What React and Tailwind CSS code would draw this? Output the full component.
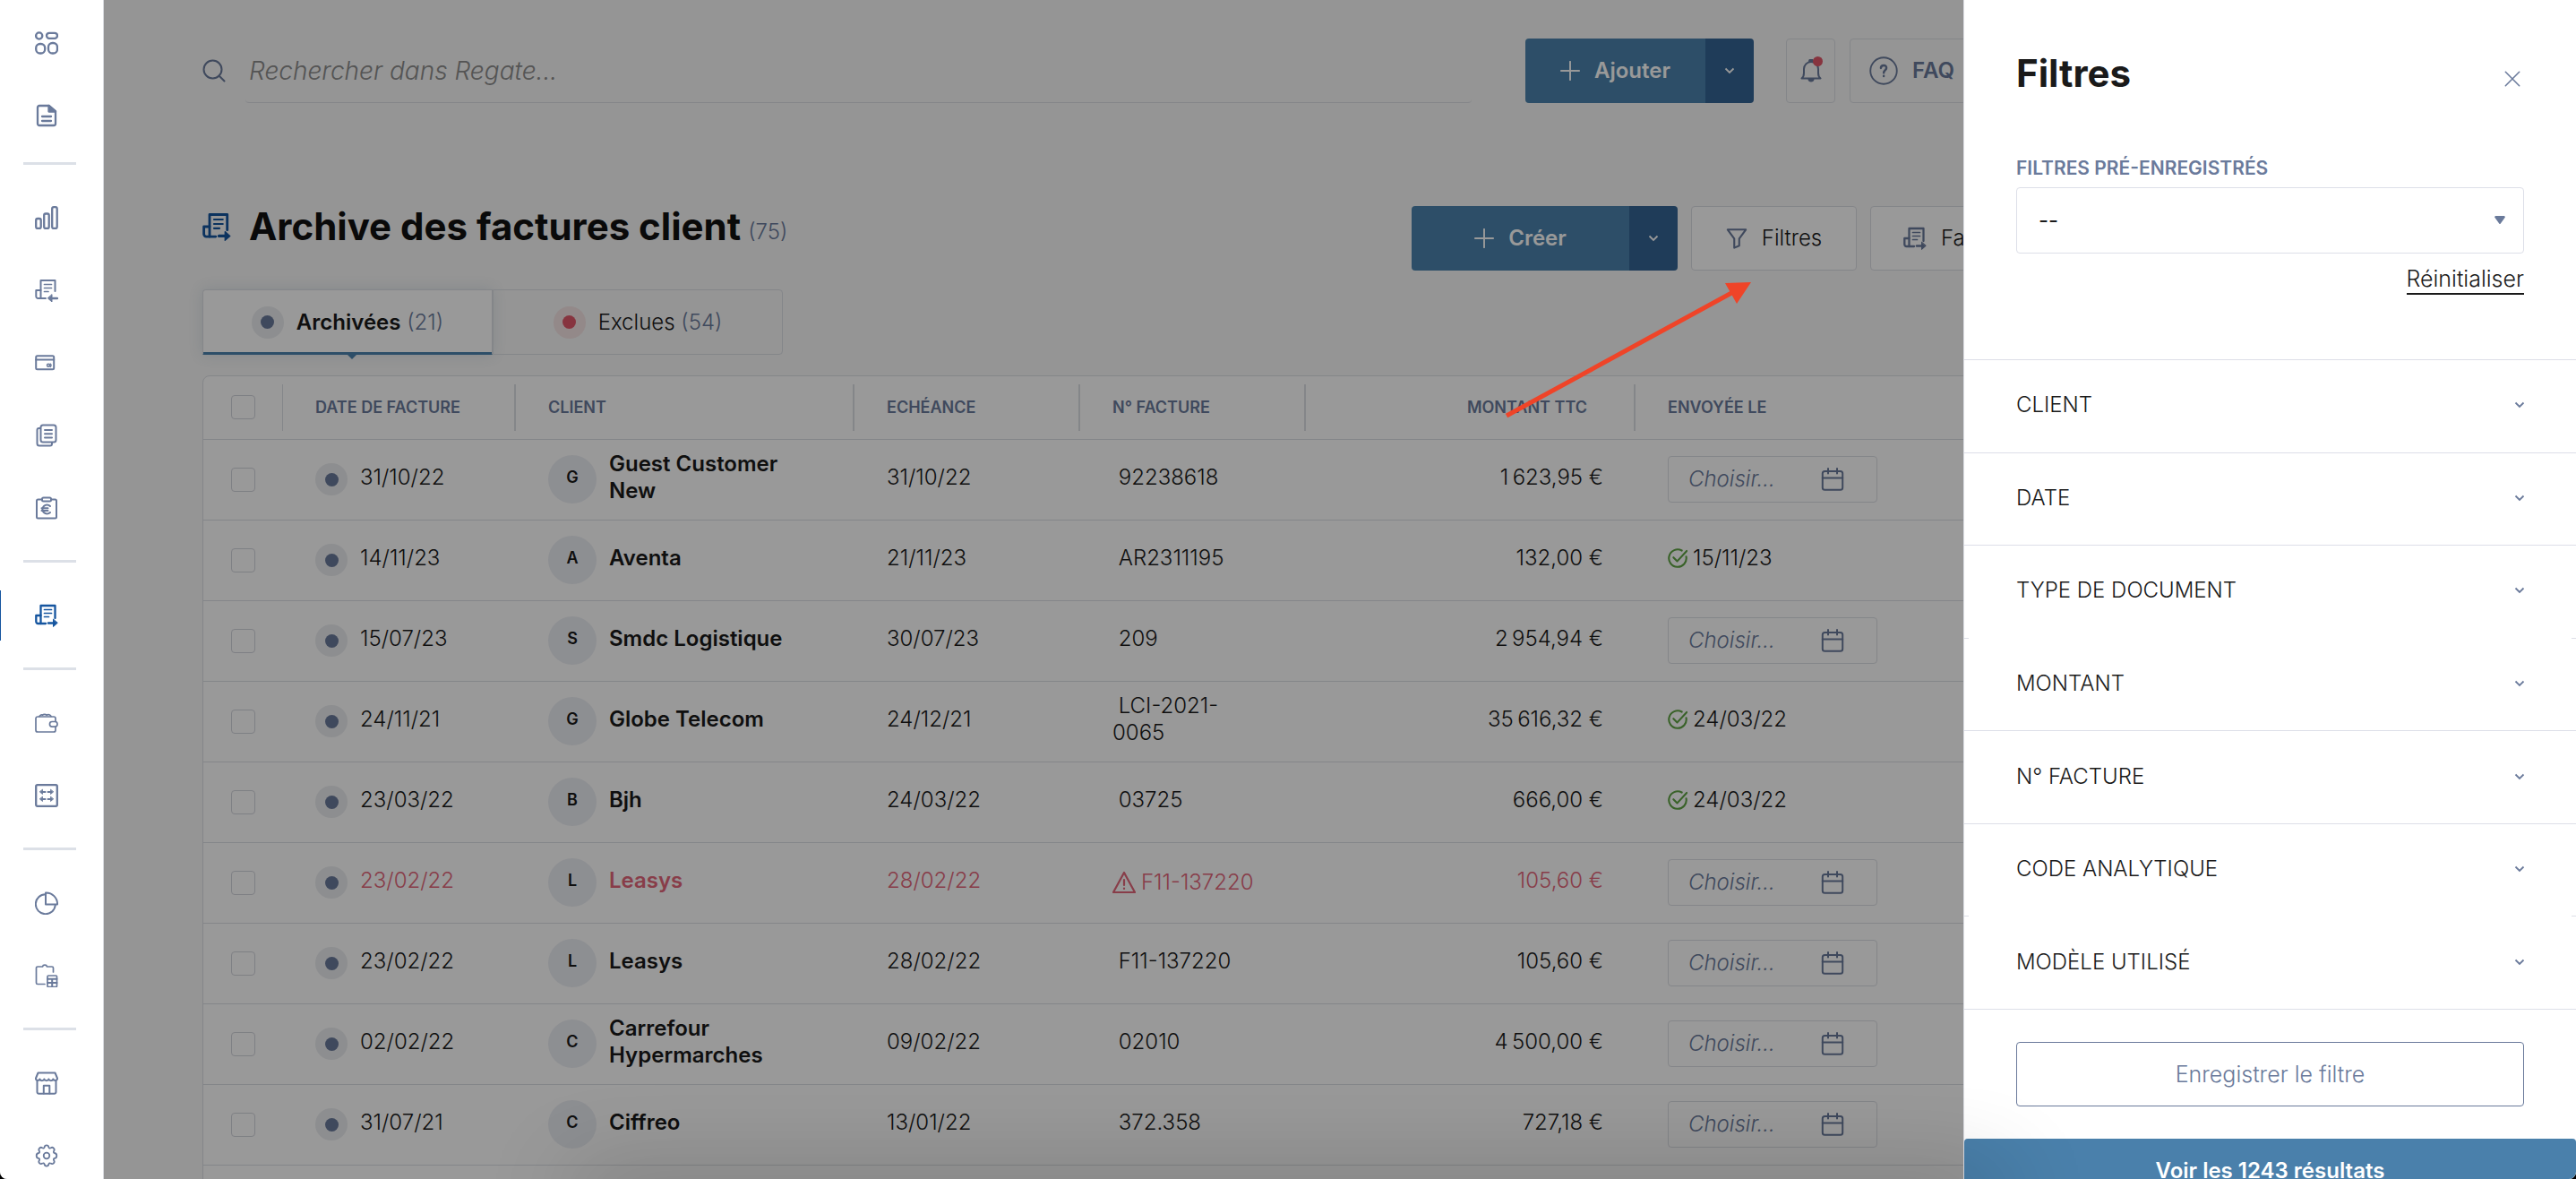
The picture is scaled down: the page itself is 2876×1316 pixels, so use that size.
import React, { useState } from "react";

const invoices = [
  { id: 1, date: "31/10/22", client: "Guest Customer New", due: "31/10/22", number: "92238618", amount: "1\u202f623,95 €" },
  { id: 2, date: "14/11/23", client: "Aventa", due: "21/11/23", number: "AR2311195", amount: "132,00 €", sent: "15/11/23" },
  { id: 3, date: "15/07/23", client: "Smdc Logistique", due: "30/07/23", number: "209", amount: "2\u202f954,94 €" },
  { id: 4, date: "24/11/21", client: "Globe Telecom", due: "24/12/21", number: "LCI-2021-0065", amount: "35\u202f616,32 €", sent: "24/03/22" },
  { id: 5, date: "23/03/22", client: "Bjh", due: "24/03/22", number: "03725", amount: "666,00 €", sent: "24/03/22" },
  { id: 6, date: "23/02/22", client: "Leasys", due: "28/02/22", number: "F11-137220", amount: "105,60 €", alert: true },
  { id: 7, date: "23/02/22", client: "Leasys", due: "28/02/22", number: "F11-137220", amount: "105,60 €" },
  { id: 8, date: "02/02/22", client: "Carrefour Hypermarches", due: "09/02/22", number: "02010", amount: "4\u202f500,00 €" },
  { id: 9, date: "31/07/21", client: "Ciffreo", due: "13/01/22", number: "372.358", amount: "727,18 €" },
];

// "short" sections only keep the two ends of their bottom line
const sections = [
  { label: "CLIENT" },
  { label: "DATE" },
  { label: "TYPE DE DOCUMENT", short: true },
  { label: "MONTANT" },
  { label: "N° FACTURE" },
  { label: "CODE ANALYTIQUE", short: true },
  { label: "MODÈLE UTILISÉ" },
];

const Svg = ({ className = "size-[26px]", width = 2, children }) => (
  <svg
    viewBox="0 0 26 26"
    className={className}
    fill="none"
    stroke="currentColor"
    strokeWidth={width}
    strokeLinecap="round"
    strokeLinejoin="round"
    aria-hidden="true"
  >
    {children}
  </svg>
);

const DashboardIcon = () => (
  <Svg width={2.300}>
    <circle cx="4.7" cy="5" r="3.6" />
    <rect x="13" y="1.8" width="12" height="6" rx="3" />
    <rect x="1.2" y="14" width="10" height="10.5" rx="4.5" />
    <rect x="15" y="13" width="10" height="11.5" rx="4.5" />
  </Svg>
);

const DocIcon = () => (
  <Svg width={2.300}>
    <path d="M5 2h11l7 6v14a2 2 0 0 1-2 2H5a2 2 0 0 1-2-2V4a2 2 0 0 1 2-2z" />
    <path d="M15.500 2l7.500 6.500h-7.500z" fill="currentColor" />
    <path d="M8 14h10M8 19h10" />
  </Svg>
);

const BarsIcon = () => (
  <Svg width={2.300}>
    <rect x="1.200" y="14" width="5.500" height="11" rx="1.800" />
    <rect x="10.200" y="8.500" width="5.500" height="16.500" rx="1.800" />
    <rect x="19.200" y="1.200" width="5.500" height="23.800" rx="1.800" />
  </Svg>
);

const InvoiceInIcon = () => (
  <Svg>
    <path d="M6.500 22V2h16v12" />
    <path d="M12 22H3.500a2.200 2.200 0 0 1-2.200-2.200V13h5.200" />
    <path d="M10.500 6.500h8M10.500 10.500h8M10.500 14.500h4.500" strokeWidth="1.700" />
    <path d="M17 22h8" strokeWidth="2.400" />
    <path d="M19 18v8l-4.500-4z" fill="currentColor" strokeWidth="1" />
  </Svg>
);

const InvoiceOutIcon = ({ className }) => (
  <Svg className={className} width={2.300}>
    <path d="M6.500 22V2h16v14" />
    <path d="M12 22H3.500a2.200 2.200 0 0 1-2.200-2.200V13h5.200" />
    <path d="M10.500 6.500h8M10.500 10.500h8M10.500 14.500h5" strokeWidth="1.700" />
    <path d="M15 21.500h7" strokeWidth="2.600" />
    <path d="M20.500 17.500v8l4.500-4z" fill="currentColor" strokeWidth="1" />
  </Svg>
);

const CardIcon = () => (
  <Svg>
    <rect x="1.200" y="5.200" width="20" height="15" rx="1.500" />
    <path d="M1.200 9.500h20" />
    <circle cx="15" cy="15.800" r="1.500" strokeWidth="1.500" />
    <path d="M17.200 14.200a2 2 0 0 1 0 3.200" strokeWidth="1.500" />
  </Svg>
);

const CopiesIcon = () => (
  <Svg>
    <rect x="6.500" y="1.500" width="17" height="19" rx="2.500" />
    <path d="M6 5H4.500a2 2 0 0 0-2 2v15a2.500 2.500 0 0 0 2.500 2.500h12a2 2 0 0 0 2-2V21" />
    <path d="M11 7h8M11 11.200h8M11 15.400h8" />
  </Svg>
);

const ClipboardEuroIcon = () => (
  <Svg>
    <path d="M8 3.500H3.500a1.500 1.500 0 0 0-1.500 1.500v18a1.500 1.500 0 0 0 1.500 1.500h19a1.500 1.500 0 0 0 1.500-1.500V5a1.500 1.500 0 0 0-1.500-1.500H18" />
    <rect x="8" y="1.500" width="10" height="4" rx="1.500" />
    <path d="M17 11a5 5 0 1 0 0 7M7.500 13.200h7M7.500 16h7" />
  </Svg>
);

const WalletIcon = () => (
  <Svg width={1.700}>
    <path d="M23 11V8a2 2 0 0 0-2-2H3a2 2 0 0 0-2 2v13a2 2 0 0 0 2 2h18a2 2 0 0 0 2-2v-3.500" />
    <path d="M5 5.500c1-1.500 2.500-2 3.500-1.300C9.500 3 12 3 13 4.200c2-1.200 4-.4 5 1.300" />
    <rect x="16.500" y="11.500" width="8.500" height="5.600" rx="2.600" />
  </Svg>
);

const ExchangeIcon = () => (
  <Svg>
    <rect x="1.200" y="1.200" width="23.600" height="23.600" rx="1.500" strokeWidth="2.300" />
    <path d="M8 9h3.500M14.500 9H18M8 17h3.500M14.500 17H18" />
    <path d="M8.500 6.500v5L5.500 9zM17.500 6.500v5l3-2.500zM8.500 14.500v5l-3-2.500zM17.500 14.500v5l3-2.500z" fill="currentColor" strokeWidth=".800" />
  </Svg>
);

const PieIcon = () => (
  <Svg>
    <path d="M12 3.200A11 11 0 1 0 22.800 15" />
    <path d="M12 1.500v13h13A12.500 12.500 0 0 0 12 1.500z" />
  </Svg>
);

const ClipboardCalcIcon = () => (
  <Svg width={1.700}>
    <path d="M11 22.500H3a1.500 1.500 0 0 1-1.500-1.500V4.500A1.500 1.500 0 0 1 3 3h5.500c.5-2.400 4.500-2.400 5 0H19a1.500 1.500 0 0 1 1.500 1.500V9" />
    <rect x="14" y="13" width="10.500" height="12.500" rx="1" />
    <path d="M14 16.800h10.500M14 21h10.500M19.200 16.800v8.500" strokeWidth="2" />
  </Svg>
);

const StoreIcon = () => (
  <Svg>
    <path d="M2.500 10v13a1.800 1.800 0 0 0 1.800 1.800h17.400a1.800 1.800 0 0 0 1.800-1.800V10" />
    <path d="M3.500 1.500h19L25 7.500c.3 2.500-3.500 3.500-4.600 1-1 2.400-4.200 2.400-5 0-.8 2.400-4.200 2.400-5 0-.8 2.400-4 2.400-5 0C4 11 .7 10 1 7.500z" />
    <path d="M9.800 24.500v-8.700h6.500v8.700" />
  </Svg>
);

const GearIcon = () => (
  <Svg width={1.800}>
    <path d="M10.600 3.600c.4-3 4.400-3 4.800 0 .2 1 1.400 1.400 2.200.8 2.400-1.800 5.200 1 3.500 3.400-.6.800-.2 2 .8 2.200 3.200.5 3.200 5.400 0 5.900-1 .2-1.400 1.400-.8 2.200 1.700 2.400-1.100 5.200-3.500 3.500-.8-.6-2-.1-2.200.8-.4 3-4.400 3-4.800 0-.2-1-1.400-1.400-2.200-.8-2.400 1.700-5.200-1.100-3.500-3.500.6-.8.200-2-.8-2.200-3.200-.5-3.200-5.400 0-5.900 1-.2 1.400-1.400.8-2.200-1.700-2.400 1.100-5.200 3.500-3.400.8.600 2 .2 2.200-.8z" />
    <circle cx="13" cy="13" r="3.300" />
  </Svg>
);

const SearchIcon = () => (
  <Svg>
    <circle cx="11.500" cy="11.500" r="10" />
    <path d="M18.500 18.500l6 6" />
  </Svg>
);

const PlusIcon = () => (
  <Svg className="size-[22px]" width={2.300}>
    <path d="M13 1v24M1 13h24" />
  </Svg>
);

const ChevronIcon = () => (
  <svg viewBox="0 0 12 8" className="h-2 w-3" fill="none" stroke="currentColor" strokeWidth="1.800" aria-hidden="true">
    <path d="M1.500 1.500L6 6l4.500-4.500" />
  </svg>
);

const BellIcon = () => (
  <Svg className="size-[26px]">
    <path d="M2.500 21.500c2-1.500 2.500-3 2.500-6V11a8 8 0 0 1 16 0v4.500c0 3 .5 4.500 2.500 6z" />
    <path d="M10.500 22.500h5c-.5 2.500-4.500 2.500-5 0zM11 2.500a2 2 0 0 1 4 0z" fill="currentColor" />
  </Svg>
);

const HelpIcon = () => (
  <Svg className="size-8" width={1.500}>
    <circle cx="13" cy="13" r="12" />
    <path d="M10.500 10.500c.2-3.300 5.200-3.200 5 0-.1 2-2.400 2-2.400 4.300M13.100 17.600v.2" strokeWidth="2" />
  </Svg>
);

const FunnelIcon = () => (
  <Svg className="size-6" width={2.300}>
    <path d="M2 2.500h22l-8 11V22l-6 2.500v-11z" />
  </Svg>
);

const CalendarIcon = () => (
  <Svg className="size-[26px] shrink-0">
    <rect x="1.800" y="4" width="22.400" height="20.800" rx="2.500" />
    <path d="M1.800 11.500h22.400M8 1v5.500M18 1v5.500" />
  </Svg>
);

const CheckIcon = () => (
  <Svg className="size-[22px] shrink-0 text-[#5fa344]" width={2.500}>
    <path d="M18.500 3A11.500 11.500 0 1 0 24.300 11" />
    <path d="M7.500 12l5 5L25 3.500" />
  </Svg>
);

const WarningIcon = () => (
  <Svg className="size-[26px] shrink-0" width={2.200}>
    <path d="M13 2L25 24H1z" />
    <path d="M13 10v6M13 19.500v.500" />
  </Svg>
);

const menu = [
  { label: "Tableau de bord", icon: DashboardIcon },
  { label: "Documents", icon: DocIcon },
  { divider: true, tight: true },
  { label: "Statistiques", icon: BarsIcon },
  { label: "Factures fournisseur", icon: InvoiceInIcon },
  { label: "Cartes", icon: CardIcon },
  { label: "Devis", icon: CopiesIcon },
  { label: "Notes de frais", icon: ClipboardEuroIcon },
  { divider: true },
  { label: "Factures client", icon: InvoiceOutIcon, active: true },
  { divider: true },
  { label: "Portefeuille", icon: WalletIcon },
  { label: "Transactions", icon: ExchangeIcon },
  { divider: true },
  { label: "Analyse", icon: PieIcon },
  { label: "Comptabilité", icon: ClipboardCalcIcon },
  { divider: true },
  { label: "Boutique", icon: StoreIcon },
  { label: "Paramètres", icon: GearIcon },
];

const Sidebar = () => (
  <nav className="relative z-20 flex w-[116px] shrink-0 flex-col border-r border-[#d8dade] bg-white pt-[7px] text-[#6a7a9b]">
    {menu.map((item, i) =>
      item.divider ? (
        <hr
          key={i}
          className={`ml-[26px] h-[3px] w-[59px] shrink-0 border-0 bg-[#dce0e7] ${item.tight ? "mt-3 mb-[18px]" : "my-[18px]"}`}
        />
      ) : (
        <a
          key={i}
          href="#"
          aria-label={item.label}
          className={`relative flex h-[81px] shrink-0 items-center pl-[39px] ${item.active ? "text-[#15559f]" : ""}`}
        >
          {item.active && <span className="absolute left-0 h-14 w-px bg-[#15559f]" />}
          <item.icon />
        </a>
      )
    )}
  </nav>
);

const SplitButton = ({ label, className }) => (
  <div className="flex h-[72px] text-white">
    <button className={`flex items-center justify-center gap-4 rounded-l bg-[#4b83ad] font-semibold ${className}`}>
      <PlusIcon />
      {label}
    </button>
    <button aria-label={`${label} : plus d'options`} className="flex w-[54px] items-center justify-center rounded-r bg-[#346594]">
      <ChevronIcon />
    </button>
  </div>
);

const Dot = ({ red }) => (
  <span className={`flex size-9 shrink-0 items-center justify-center rounded-full ${red ? "bg-[#f6e4e4]" : "bg-[#ebedf0]"}`}>
    <span className={`size-[15px] rounded-full ${red ? "bg-[#e2586a]" : "bg-[#6a7a9b]"}`} />
  </span>
);

const Check = ({ label }) => (
  <input
    type="checkbox"
    aria-label={label}
    className="block size-[27px] appearance-none rounded border border-[#d3d5dd] bg-white checked:bg-[#4b83ad]"
  />
);

const HeadCell = ({ children, className = "pl-9" }) => (
  <th className="h-[70px] p-0 font-semibold">
    <div className={`flex h-[52px] items-center border-r-2 border-[#dddfe5] text-lg ${className}`}>{children}</div>
  </th>
);

const InvoiceRow = ({ invoice }) => {
  const { date, client, due, number, amount, sent, alert } = invoice;
  return (
    <tr className={`h-[90px] border-y border-[#dddfe5] ${alert ? "text-[#e3667a]" : ""}`}>
      <td className="pl-[31px]">
        <Check label={`Sélectionner ${client}`} />
      </td>
      <td className="pl-9">
        <div className="flex items-center gap-[14px]">
          <Dot />
          <span className="pb-1">{date}</span>
        </div>
      </td>
      <td className="pl-9">
        <div className="flex items-center gap-[14px] font-semibold">
          <span className="flex size-[54px] shrink-0 items-center justify-center rounded-full bg-[#eceef4] pb-1 text-lg text-[#1a1a1a]">
            {client[0]}
          </span>
          <span className="w-[200px] pb-1">{client}</span>
        </div>
      </td>
      <td className="pb-1 pl-9">{due}</td>
      <td className="pl-9">
        {alert ? (
          <div className="flex items-center gap-[6px]">
            <WarningIcon />
            {number}
          </div>
        ) : (
          <div className="w-[140px] pb-1">&nbsp;{number}</div>
        )}
      </td>
      <td className="pr-9 pb-1 text-right">{amount}</td>
      <td className="pl-9">
        {sent ? (
          <div className="flex items-center gap-[6px] pb-1">
            <CheckIcon />
            {sent}
          </div>
        ) : (
          <label className="flex h-[52px] w-[234px] items-center rounded border border-[#dddfe5] pr-9 pl-[22px] text-[#6a7a9b]">
            <input
              type="text"
              placeholder="Choisir..."
              aria-label={`Date d'envoi ${number}`}
              className="min-w-0 flex-1 italic outline-none placeholder:text-[#6a7a9b]"
            />
            <CalendarIcon />
          </label>
        )}
      </td>
    </tr>
  );
};

const FilterDrawer = () => {
  const [preset, setPreset] = useState("");

  return (
    <aside className="absolute inset-y-0 right-0 z-20 flex w-[684px] flex-col overflow-hidden border-l border-[#dddfe5] bg-white">
      <div className="flex h-[401px] shrink-0 flex-col px-[58px] pt-[58px]">
        <div className="flex items-end justify-between">
          <h2 className="text-[42px] leading-[48px] font-bold">Filtres</h2>
          <button aria-label="Fermer" className="mr-[3px] mb-2 text-[#6a7a9b]">
            <Svg className="size-5">
              <path d="M3 3l20 20M23 3L3 23" />
            </Svg>
          </button>
        </div>
        <label htmlFor="preset" className="mt-[68px] text-[21px] leading-7 font-semibold text-[#6a7a9b]">
          FILTRES PRÉ-ENREGISTRÉS
        </label>
        <div className="relative mt-[7px]">
          <select
            id="preset"
            value={preset}
            onChange={(e) => setPreset(e.target.value)}
            className="h-[74px] w-full appearance-none rounded border border-[#dddfe8] bg-white pl-6 font-normal"
          >
            <option value="">--</option>
          </select>
          <svg viewBox="0 0 12 9" className="pointer-events-none absolute top-8 right-[21px] h-[9px] w-3 fill-[#6a7a9b]" aria-hidden="true">
            <path d="M1.500 0h9a1.200 1.200 0 0 1 1 2L7 8.300a1.200 1.200 0 0 1-2 0L.5 2a1.200 1.200 0 0 1 1-2z" />
          </svg>
        </div>
        <button className="mt-3 self-end border-b-2 border-[#1a1a1a] text-[25px] leading-8">Réinitialiser</button>
      </div>

      <div className="flex h-[726px] shrink-0 flex-col border-t border-[#dddfe8]">
        {sections.map(({ label, short }) => (
          <button key={label} className="relative flex flex-1 items-center justify-between border-b border-[#dddfe8] pr-[57px] pb-[2px] pl-[58px]">
            {label}
            <span className="text-[#6a7a9b]">
              <ChevronIcon />
            </span>
            {short && <span className="absolute inset-x-[5px] -bottom-px h-px bg-white" />}
          </button>
        ))}
      </div>

      <div className="shrink-0 px-[58px] py-9">
        <button className="h-[72px] w-full rounded border border-[#6a7a9b] text-[25px] text-[#6a7a9b]">Enregistrer le filtre</button>
      </div>
      <button className="h-[72px] shrink-0 rounded-t bg-[#4a80ab] font-semibold text-white">Voir les 1243 résultats</button>
    </aside>
  );
};

const App = () => {
  const [tab, setTab] = useState("archived");

  const tabClass = (name) =>
    `relative flex h-[73px] w-[324px] items-center justify-center gap-[14px] border ${
      tab === name
        ? "rounded-tl border-[#dddfe5] border-b-[#4b83ad] bg-white shadow-[0_0_16px_rgba(60,110,140,0.15),inset_0_-2px_0_#4b83ad]"
        : "rounded-r border-[#dddfe5]"
    }`;

  return (
    <div className="bg-black">
      <div className="relative flex h-screen overflow-hidden rounded-b-lg bg-[#f8f8f8] font-['Inter',sans-serif] text-2xl leading-[30px] font-light text-[#1a1a1a]">
        <Sidebar />

        <main className="min-w-0 flex-1 px-[110px] pt-[43px]">
          <header className="flex">
            <label className="flex flex-1 items-center gap-[22px] text-[#6a7a9b]">
              <SearchIcon />
              <input
                type="search"
                placeholder="Rechercher dans Regate..."
                aria-label="Rechercher"
                className="h-[72px] flex-1 rounded border-b border-[#dddfe5] pl-1 text-[28px] italic outline-none placeholder:text-[#8c8c8c]"
              />
            </label>
            <div className="ml-[60px] flex w-[1063px] text-[#6a7a9b]">
              <SplitButton label="Ajouter" className="w-[201px]" />
              <button aria-label="Notifications" className="relative ml-9 flex h-[72px] w-[55px] items-center justify-center rounded border border-[#dddfe5]">
                <BellIcon />
                <span className="absolute top-[19px] right-[13px] size-[11px] rounded-full bg-[#e2586a]" />
              </button>
              <button className="ml-4 flex h-[72px] flex-1 items-center gap-4 rounded border border-[#dddfe5] pl-[21px] font-semibold">
                <HelpIcon />
                FAQ
              </button>
            </div>
          </header>

          <div className="mt-[115px] flex items-start">
            <div className="flex flex-1 items-center">
              <span className="text-[#15559f]">
                <InvoiceOutIcon className="size-8" />
              </span>
              <h1 className="ml-5 text-[42px] leading-[46px] font-bold text-[#111]">Archive des factures client</h1>
              <span className="ml-2 pt-3 text-[#6a7a9b]">(75)</span>
            </div>
            <div className="flex w-[1190px] gap-[15px]">
              <SplitButton label="Créer" className="w-[243px]" />
              <button className="flex h-[72px] w-[185px] items-center justify-center gap-4 rounded border border-[#dddfe5] bg-white">
                <span className="text-[#6a7a9b]">
                  <FunnelIcon />
                </span>
                Filtres
              </button>
              <button className="flex h-[72px] flex-1 items-center gap-4 rounded border border-[#dddfe5] bg-white pl-9">
                <span className="text-[#6a7a9b]">
                  <InvoiceOutIcon className="size-[26px]" />
                </span>
                Factures client
              </button>
            </div>
          </div>

          <div className="mt-[21px] flex">
            <button className={tabClass("archived")} onClick={() => setTab("archived")}>
              <Dot />
              <span>
                <b className="font-semibold">Archivées</b> <span className="text-[#6a7a9b]">(21)</span>
              </span>
              <svg viewBox="0 0 12 6" className="absolute -bottom-[6px] left-40 h-[6px] w-3 fill-[#4b83ad]" aria-hidden="true">
                <path d="M0 0h12L6 6z" />
              </svg>
            </button>
            <button className={tabClass("excluded")} onClick={() => setTab("excluded")}>
              <Dot red />
              <span>
                Exclues <span className="text-[#6a7a9b]">(54)</span>
              </span>
            </button>
          </div>

          <div className="mt-[23px] rounded-t-lg border border-[#dddfe5] bg-white pb-24">
            <table className="w-full table-fixed text-left">
              <colgroup>
                <col className="w-[89px]" />
                <col className="w-[260px]" />
                <col className="w-[378px]" />
                <col className="w-[252px]" />
                <col className="w-[252px]" />
                <col className="w-[368px]" />
                <col />
              </colgroup>
              <thead className="text-[#6a7a9b]">
                <tr>
                  <th className="p-0">
                    <div className="flex h-[52px] items-center border-r border-[#dddfe5] pl-[31px]">
                      <Check label="Tout sélectionner" />
                    </div>
                  </th>
                  <HeadCell>DATE DE FACTURE</HeadCell>
                  <HeadCell>CLIENT</HeadCell>
                  <HeadCell>ECHÉANCE</HeadCell>
                  <HeadCell>N° FACTURE</HeadCell>
                  <HeadCell className="justify-end pr-[52px]">MONTANT TTC</HeadCell>
                  <HeadCell>ENVOYÉE LE</HeadCell>
                </tr>
              </thead>
              <tbody>
                {invoices.map((invoice) => (
                  <InvoiceRow key={invoice.id} invoice={invoice} />
                ))}
              </tbody>
            </table>
          </div>
        </main>

        <div className="absolute inset-0 z-10 bg-black/40" />
        <FilterDrawer />

        {/* soft shade along the bottom edge */}
        <div className="pointer-events-none absolute inset-x-[640px] top-full z-30 h-10 shadow-[0_0_100px_rgba(0,0,0,0.3)]" />

        {/* arrow pointing at the filter button */}
        <svg viewBox="0 0 280 156" className="pointer-events-none absolute top-[312px] left-[1677px] z-10 h-[156px] w-[280px]" aria-hidden="true">
          <path d="M5 152L258 14" stroke="#ef4428" strokeWidth="5" />
          <path d="M278 3L249 4l13 23z" fill="#ef4428" />
        </svg>
      </div>
    </div>
  );
};

export default App;
